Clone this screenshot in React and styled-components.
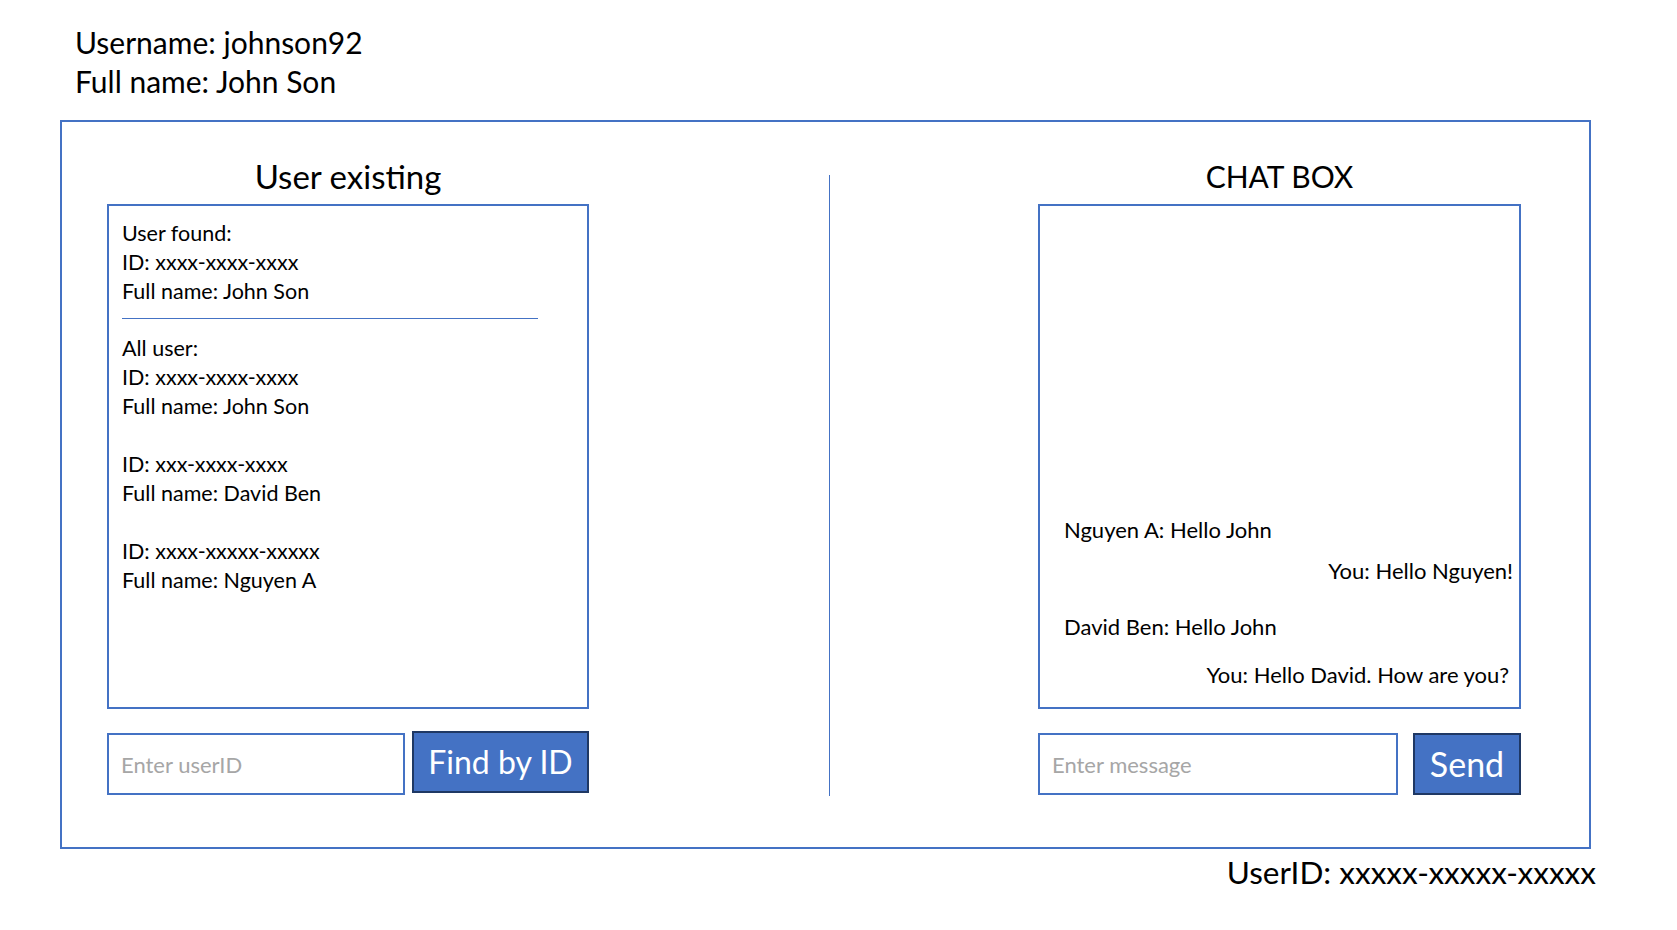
import React from 'react';
import styled, { createGlobalStyle } from 'styled-components';

const GlobalStyle = createGlobalStyle`
  html, body {
    margin: 0;
    padding: 0;
    background: #ffffff;
  }
  body {
    font-family: Lato, "Open Sans", "Liberation Sans", sans-serif;
    color: #000000;
  }
  * {
    box-sizing: border-box;
  }
`;

const Page = styled.div`
  width: 1677px;
  height: 930px;
  padding-top: 23px;
  overflow: hidden;
`;

const Header = styled.div`
  padding-left: 75px;
  font-size: 30px;
  line-height: 38.5px;
`;

const Frame = styled.div`
  margin: 20px 0 0 60px;
  width: 1531px;
  height: 729px;
  border: 2px solid #4472c4;
  display: flex;
  align-items: flex-start;
  padding: 34px 68px 0 45px;
`;

const Column = styled.div`
  width: ${p => p.$width}px;
  display: flex;
  flex-direction: column;
`;

const Title = styled.div`
  height: 40px;
  line-height: 40px;
  font-size: ${p => p.$size}px;
  text-align: center;
  margin-bottom: 8px;
`;

const ListBox = styled.div`
  height: 505px;
  border: 2px solid #4472c4;
  padding: 13px 13px;
  font-size: 21.5px;
  line-height: 29px;
`;

const Line = styled.div`
  white-space: nowrap;
`;

const Group = styled.div`
  margin-top: ${p => (p.$first ? 0 : 29)}px;
`;

const Rule = styled.div`
  width: 416px;
  height: 1px;
  background: #4472c4;
  margin: 12px 0 15px;
`;

const Divider = styled.div`
  width: 1px;
  height: 621px;
  margin: 19px 208px 0 240px;
  background: #4472c4;
`;

const ChatBox = styled.div`
  height: 505px;
  border: 2px solid #4472c4;
  display: flex;
  flex-direction: column;
  justify-content: flex-end;
  padding: 0 0 18px;
  font-size: 22px;
  line-height: 29px;
`;

const Message = styled.div`
  margin-top: ${p => p.$gap}px;
  text-align: ${p => (p.$mine ? 'right' : 'left')};
  padding-left: ${p => (p.$mine ? 0 : 24)}px;
  padding-right: ${p => p.$inset || 0}px;
  white-space: nowrap;
`;

const Controls = styled.div`
  display: flex;
  align-items: flex-start;
  gap: ${p => p.$gap}px;
  margin-top: 24px;
`;

const TextInput = styled.input`
  width: ${p => p.$width}px;
  height: 62px;
  border: 2px solid #4472c4;
  border-radius: 0;
  padding: 0 12px;
  font-family: inherit;
  font-size: 22px;
  color: #000000;
  background: #ffffff;
  outline: none;

  &::placeholder {
    color: #a6a6a6;
  }
`;

const ActionButton = styled.button`
  width: ${p => p.$width}px;
  height: 62px;
  margin-top: ${p => (p.$lift ? -2 : 0)}px;
  padding: 0;
  border: 2px solid #1f3864;
  border-radius: 0;
  background: #4472c4;
  color: #ffffff;
  font-family: inherit;
  font-size: ${p => p.$size}px;
  line-height: 1;
  cursor: pointer;
`;

const Footer = styled.div`
  margin-top: 5px;
  padding-right: 81px;
  text-align: right;
  font-size: 31.5px;
  line-height: 36px;
`;

const allUsers = [
  { id: 'xxxx-xxxx-xxxx', name: 'John Son' },
  { id: 'xxx-xxxx-xxxx', name: 'David Ben' },
  { id: 'xxxx-xxxxx-xxxxx', name: 'Nguyen A' },
];

const messages = [
  { text: 'Nguyen A: Hello John', gap: 0 },
  { text: 'You: Hello Nguyen!', mine: true, gap: 12, inset: 6 },
  { text: 'David Ben: Hello John', gap: 27 },
  { text: 'You: Hello David. How are you?', mine: true, gap: 19, inset: 10 },
];

const App = () => (
  <Page>
    <GlobalStyle />
    <Header>
      <div>Username: johnson92</div>
      <div>Full name: John Son</div>
    </Header>
    <Frame>
      <Column $width={482}>
        <Title $size={33}>User existing</Title>
        <ListBox>
          <Line>User found:</Line>
          <Line>ID: xxxx-xxxx-xxxx</Line>
          <Line>Full name: John Son</Line>
          <Rule />
          <Line>All user:</Line>
          {allUsers.map((u, i) => (
            <Group key={u.id} $first={i === 0}>
              <Line>ID: {u.id}</Line>
              <Line>Full name: {u.name}</Line>
            </Group>
          ))}
        </ListBox>
        <Controls $gap={7}>
          <TextInput $width={298} placeholder="Enter userID" />
          <ActionButton $width={177} $size={32} $lift>Find by ID</ActionButton>
        </Controls>
      </Column>
      <Divider />
      <Column $width={483}>
        <Title $size={30}>CHAT BOX</Title>
        <ChatBox>
          {messages.map(m => (
            <Message key={m.text} $mine={m.mine} $gap={m.gap} $inset={m.inset}>
              {m.text}
            </Message>
          ))}
        </ChatBox>
        <Controls $gap={15}>
          <TextInput $width={360} placeholder="Enter message" />
          <ActionButton $width={108} $size={34}>Send</ActionButton>
        </Controls>
      </Column>
    </Frame>
    <Footer>UserID: xxxxx-xxxxx-xxxxx</Footer>
  </Page>
);

export default App;
